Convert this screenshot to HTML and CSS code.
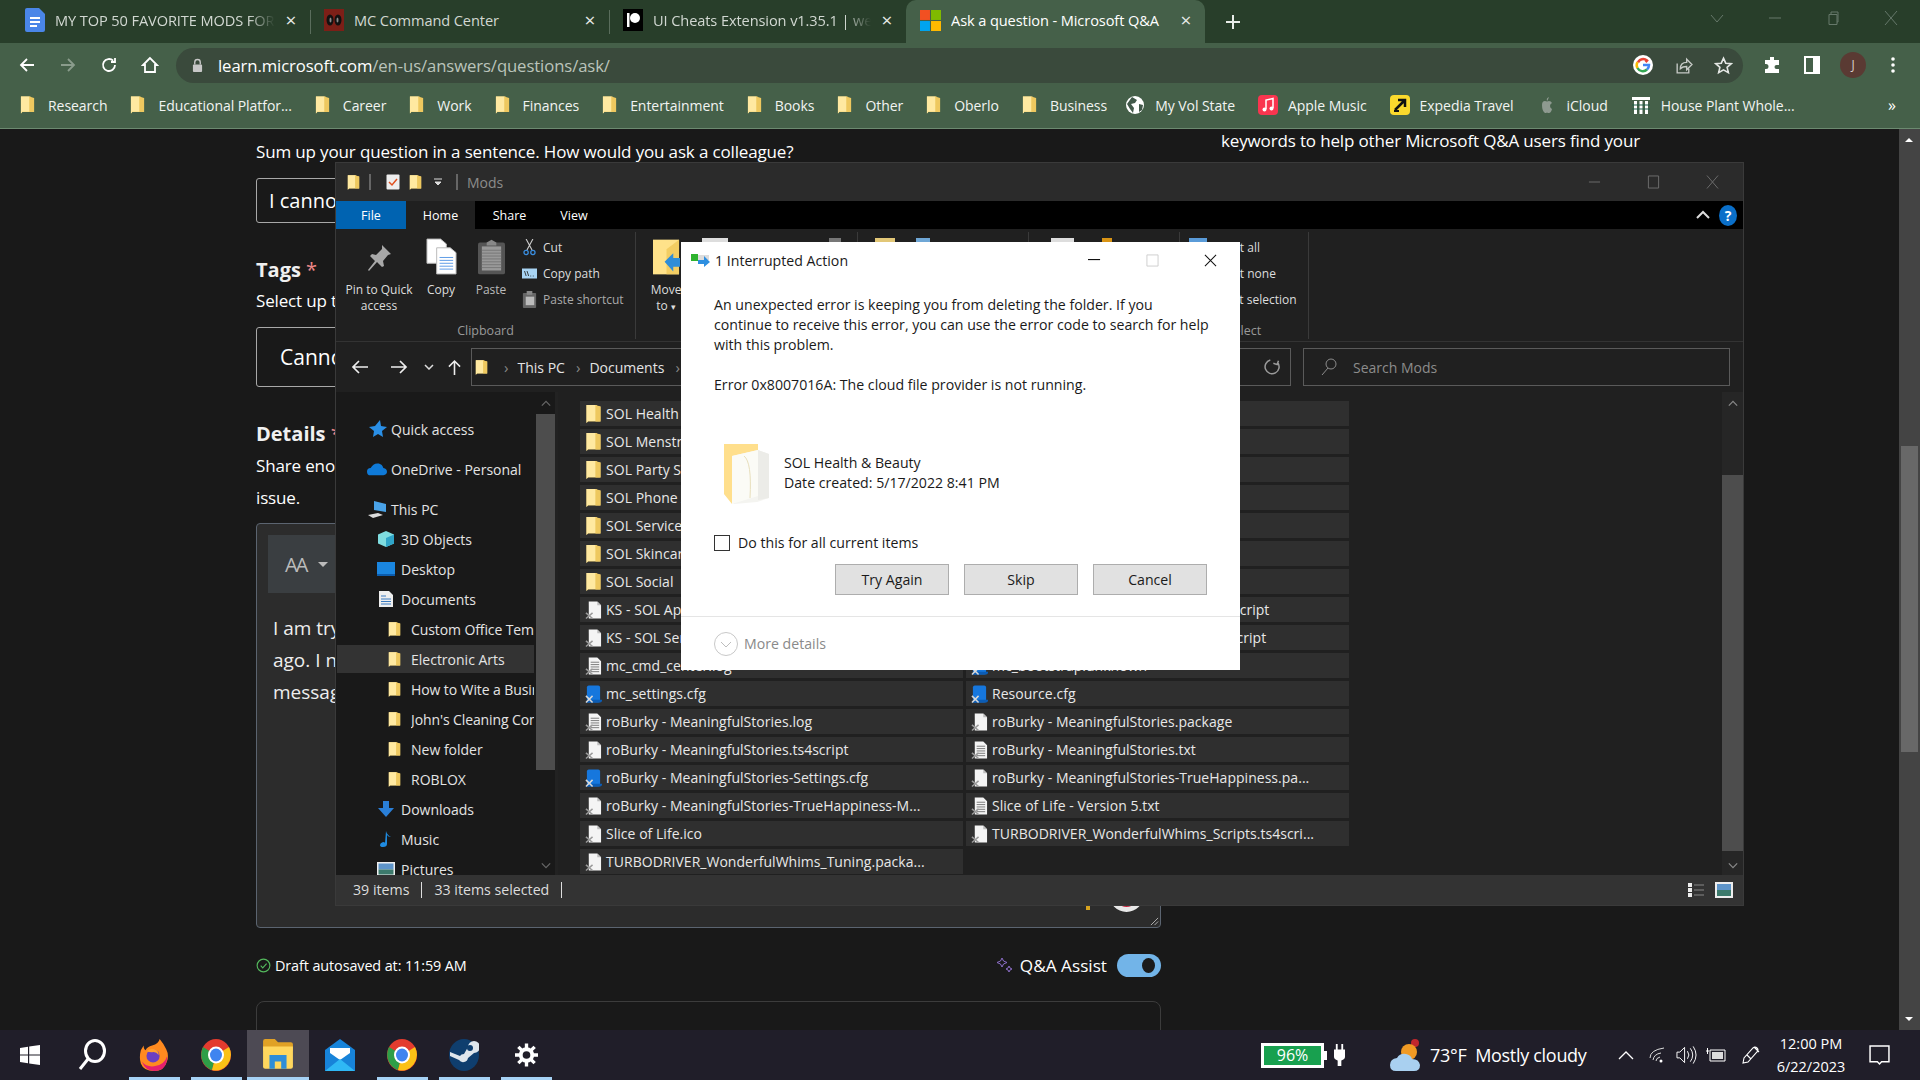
FILE: index.html
```html
<!DOCTYPE html>
<html lang="en">
<head>
<meta charset="utf-8">
<title>Ask a question - Microsoft Q&amp;A</title>
<link rel="stylesheet" href="styles.css">
</head>
<body>
<svg class="defs" aria-hidden="true">
  <symbol id="folder" viewBox="0 0 16 20"><path d="M1 1h10l1 1.500h3v15H2.500L1 19z" fill="#f5d77c"/><path d="M1 1h9v16H2.500L1 19z" fill="#ffe9a1"/><path d="M10 1l5 1.500v15H10z" fill="#eec85f"/></symbol>
  <symbol id="doc" viewBox="0 0 18 20"><path d="M4 1h9l4 4v14H4z" fill="#f4f4f4"/><path d="M13 1v4h4z" fill="#bdbdbd"/><path d="M1 13l7 6M8 13l-7 6" stroke="#9a9a9a" stroke-width="1.600"/></symbol>
  <symbol id="txt" viewBox="0 0 18 20"><path d="M4 1h9l4 4v14H4z" fill="#f4f4f4"/><path d="M6 6h9M6 8.500h9M6 11h9M6 13.500h9M6 16h9" stroke="#777"/><path d="M1 13l7 6M8 13l-7 6" stroke="#9a9a9a" stroke-width="1.600"/></symbol>
  <symbol id="cfg" viewBox="0 0 18 20"><path d="M2 3q0-2 2-2h10q2 0 2 2v15q0 1-2 1H2z" fill="#1677dd"/><path d="M2 16h16v1q0 2-2 2H2z" fill="#0b5cb5"/><path d="M1 12l7 7M8 12l-7 7" stroke="#d8d8d8" stroke-width="1.600"/></symbol>
  <symbol id="chrome" viewBox="0 0 30 32"><ellipse cx="15" cy="16" rx="15" ry="16" fill="#e33b2e"/><path d="M15 16L2 8v0a15 16 0 0 0 9 23z" fill="#2e9e47"/><path d="M15 16l13-8a15 16 0 0 1-17 23z" fill="#fbc116"/><ellipse cx="15" cy="16" rx="8" ry="8.500" fill="#fff"/><ellipse cx="15" cy="16" rx="6" ry="6.500" fill="#3f84f0"/></symbol>
</svg>

<header class="tabstrip">
  <div class="tab tab-first">
    <svg class="tab-ico" viewBox="0 0 20 24"><path d="M2 0h12l6 6v16q0 2-2 2H2q-2 0-2-2V2q0-2 2-2z" fill="#4a86e8"/><path d="M5 9h10v2H5zM5 13h10v2H5zM5 17h7v2H5z" fill="#fff"/></svg>
    <span class="tab-title fade">MY TOP 50 FAVORITE MODS FOR THE SIMS 4</span><span class="tab-x">×</span>
  </div>
  <div class="tab">
    <svg class="tab-ico" viewBox="0 0 20 22"><rect width="20" height="22" fill="#7c1f17"/><ellipse cx="6" cy="11" rx="3.500" ry="5.500" fill="#111"/><ellipse cx="14" cy="11" rx="3.500" ry="5.500" fill="#111"/><ellipse cx="6.500" cy="11" rx="1" ry="2.500" fill="#8a8a8a"/><ellipse cx="13.500" cy="11" rx="1" ry="2.500" fill="#8a8a8a"/></svg>
    <span class="tab-title">MC Command Center</span><span class="tab-x">×</span>
  </div>
  <div class="tab tab-third">
    <svg class="tab-ico" viewBox="0 0 20 22"><rect width="20" height="22" fill="#000"/><rect x="4" y="4" width="2.500" height="14" fill="#fff"/><circle cx="12" cy="9" r="5" fill="#fff"/></svg>
    <span class="tab-title fade">UI Cheats Extension v1.35.1 | weerbesu</span><span class="tab-x">×</span>
  </div>
  <div class="tab tab-active">
    <svg class="tab-ico ms" viewBox="0 0 20 20"><rect width="9.500" height="9.500" fill="#f25022"/><rect x="10.500" width="9.500" height="9.500" fill="#7fba00"/><rect y="10.500" width="9.500" height="9.500" fill="#00a4ef"/><rect x="10.500" y="10.500" width="9.500" height="9.500" fill="#ffb900"/></svg>
    <span class="tab-title">Ask a question - Microsoft Q&amp;A</span><span class="tab-x">×</span>
  </div>
  <svg class="newtab" viewBox="0 0 16 16"><path d="M8 1v14M1 8h14" stroke="#e8ece8" stroke-width="2"/></svg>
  <div class="wincontrols">
    <svg viewBox="0 0 14 14"><path d="M1 4l6 7 6-7" fill="none" stroke="#66786a"/></svg>
    <svg viewBox="0 0 14 14"><path d="M1 7h12" stroke="#66786a"/></svg>
    <svg viewBox="0 0 14 14"><path d="M3 3.500h8v10H3zM5 3.500V1h7v10h-1" fill="none" stroke="#66786a"/></svg>
    <svg viewBox="0 0 14 14"><path d="M1 0l12 14M13 0L1 14" stroke="#66786a"/></svg>
  </div>
</header>

<nav class="toolbar">
  <div class="navbtns">
    <svg viewBox="0 0 18 18"><path d="M16 9H3M9 3L3 9l6 6" fill="none" stroke="#fff" stroke-width="1.800"/></svg>
    <svg viewBox="0 0 18 18"><path d="M2 9h13M9 3l6 6-6 6" fill="none" stroke="#8a9c8c" stroke-width="1.800"/></svg>
    <svg viewBox="0 0 18 18"><path d="M15 9a6 6 0 1 1-1.800-4.300M15 2v4h-4" fill="none" stroke="#fff" stroke-width="1.800"/></svg>
    <svg viewBox="0 0 18 18"><path d="M9 2L2 9h2v7h10V9h2z" fill="none" stroke="#fff" stroke-width="1.800"/></svg>
  </div>
  <div class="omnibox">
    <svg class="lock" viewBox="0 0 12 16"><path d="M3 7V4.500a3 3 0 0 1 6 0V7" fill="none" stroke="#c8c8c8" stroke-width="1.500"/><rect x="1" y="7" width="10" height="8" rx="1" fill="#c8c8c8"/></svg>
    <span class="url"><b>learn.microsoft.com</b>/en-us/answers/questions/ask/</span>
    <svg class="gicon" viewBox="0 0 20 20"><circle cx="10" cy="10" r="10" fill="#fff"/><path d="M10 4a6 6 0 0 1 4 1.500L12.500 7" fill="none" stroke="#ea4335" stroke-width="2.500"/><path d="M5 7.500a6 6 0 0 1 5-3.500" fill="none" stroke="#ea4335" stroke-width="2.500"/><path d="M4.500 7a6 6 0 0 0 0 6" fill="none" stroke="#fbbc05" stroke-width="2.500"/><path d="M4.500 13a6 6 0 0 0 9.500 1.500" fill="none" stroke="#34a853" stroke-width="2.500"/><path d="M10 10h6a6 6 0 0 1-2 4.500" fill="none" stroke="#4285f4" stroke-width="2.500"/></svg>
    <svg class="omni-ico" viewBox="0 0 18 18"><path d="M3 7v9h11v-4M6 12q0-6 6-6V3l5 5-5 5v-3q-4 0-6 2z" fill="none" stroke="#c5c9c5" stroke-width="1.300"/></svg>
    <svg class="omni-ico" viewBox="0 0 18 18"><path d="M9 2l2.100 4.800 5.200.5-3.900 3.400 1.200 5.100L9 13.100l-4.600 2.700 1.200-5.100L1.700 7.300l5.200-.5z" fill="none" stroke="#e4e7e4" stroke-width="1.500"/></svg>
  </div>
  <div class="tool-right">
    <svg viewBox="0 0 18 18"><path d="M7 1h4v3h5v5h-2.500a2 2 0 0 0 0 4H16v4H2v-4h1a2.500 2.500 0 0 0 0-5H2V4h5z" fill="#fff"/></svg>
    <svg viewBox="0 0 18 18"><path d="M2 1h14v16H2z" fill="none" stroke="#fff" stroke-width="2"/><path d="M10 1h6v16h-6z" fill="#fff"/></svg>
    <span class="avatar">J</span>
    <svg class="kebab" viewBox="0 0 6 18"><circle cx="3" cy="3" r="1.800" fill="#fff"/><circle cx="3" cy="9" r="1.800" fill="#fff"/><circle cx="3" cy="15" r="1.800" fill="#fff"/></svg>
  </div>
</nav>

<div class="bookmarks">
  <div class="bm"><svg class="bm-ico"><use href="#folder"/></svg>Research</div>
  <div class="bm"><svg class="bm-ico"><use href="#folder"/></svg>Educational Platfor...</div>
  <div class="bm"><svg class="bm-ico"><use href="#folder"/></svg>Career</div>
  <div class="bm"><svg class="bm-ico"><use href="#folder"/></svg>Work</div>
  <div class="bm"><svg class="bm-ico"><use href="#folder"/></svg>Finances</div>
  <div class="bm"><svg class="bm-ico"><use href="#folder"/></svg>Entertainment</div>
  <div class="bm"><svg class="bm-ico"><use href="#folder"/></svg>Books</div>
  <div class="bm"><svg class="bm-ico"><use href="#folder"/></svg>Other</div>
  <div class="bm"><svg class="bm-ico"><use href="#folder"/></svg>Oberlo</div>
  <div class="bm"><svg class="bm-ico"><use href="#folder"/></svg>Business</div>
  <div class="bm bm-globe"><svg class="bm-ico wide" viewBox="0 0 20 20"><circle cx="10" cy="10" r="9" fill="#fff"/><path d="M7 2l5 3-2 3-4 1 3 4-1 5-3-4-3-5zM14 9l4 1-1 5-3 2z" fill="#42594a"/></svg>My Vol State</div>
  <div class="bm"><svg class="bm-ico wide" viewBox="0 0 20 20"><rect width="20" height="20" rx="4" fill="#f9354f"/><path d="M8 14V5l7-1.500V13" fill="none" stroke="#fff" stroke-width="1.500"/><circle cx="6.500" cy="14.500" r="2" fill="#fff"/><circle cx="13.500" cy="13.500" r="2" fill="#fff"/></svg>Apple Music</div>
  <div class="bm"><svg class="bm-ico wide" viewBox="0 0 20 20"><rect width="20" height="20" rx="4" fill="#fbd92d"/><path d="M5 15l9-9M8 5h7v7" fill="none" stroke="#111" stroke-width="2.500"/><path d="M4 16h5" stroke="#111" stroke-width="2"/></svg>Expedia Travel</div>
  <div class="bm"><svg class="bm-ico wide" viewBox="0 0 20 20"><path d="M10 6q-1-3 2-4-1 3-2 4zM5 10q0-4 3-4 1 0 2 .5 1-.5 2-.5 2 0 3 2-2 1-2 3t2 3q-1 4-3 4-1 0-2-.5-1 .5-2 .5-3-2-3-8z" fill="#8e9a90"/></svg>iCloud</div>
  <div class="bm"><svg class="bm-ico wide" viewBox="0 0 20 20"><path d="M1 2h18v3H1z" fill="#fff"/><path d="M3 6h3v13H3zM8.500 6h3v13h-3zM14 6h3v13h-3z" fill="#fff"/><path d="M1 10h18M1 14h18" stroke="#1f5c46" stroke-width="1.200"/></svg>House Plant Whole...</div>
  <span class="bm-more">»</span>
</div>

<main class="page">
  <div class="page-inner">
    <section class="left-col">
      <p class="lead">Sum up your question in a sentence. How would you ask a colleague?</p>
      <div class="field field-title">I cannot delete folders</div>
      <h2 class="label tags-label">Tags <span class="req">*</span></h2>
      <p class="lead tight">Select up to 5 tags</p>
      <div class="field field-tags">Cannot delete</div>
      <h2 class="label details-label">Details <span class="req">*</span></h2>
      <p class="lead tight">Share enough details</p>
      <p class="lead issue">issue.</p>
      <div class="editor">
        <div class="ed-toolbar"><span class="ed-aa">AA</span><span class="ed-caret"></span></div>
        <p class="ed-text">I am trying to delete a folder<br>ago. I need help with the<br>message</p>
        <div class="ed-foot"><i class="ed-dot"></i><i class="ed-emoji"></i></div>
        <svg class="ed-resize" viewBox="0 0 10 10"><path d="M9 1L1 9M9 5L5 9" stroke="#bbb"/></svg>
      </div>
      <div class="draftrow">
        <svg class="checkc" viewBox="0 0 16 16"><circle cx="8" cy="8" r="6.800" fill="none" stroke="#54b95d" stroke-width="1.200"/><path d="M5 8.200l2.200 2.300L11.300 6" fill="none" stroke="#54b95d" stroke-width="1.200"/></svg>
        <span class="draft">Draft autosaved at: 11:59 AM</span>
        <svg class="spark" viewBox="0 0 16 16"><path d="M5 1l1.500 3L10 5.500 6.500 7 5 10 3.500 7 0 5.500 3.500 4zM12 9l1 2 2 1-2 1-1 2-1-2-2-1 2-1z" fill="none" stroke="#8c6ec8"/></svg>
        <span class="assist">Q&amp;A Assist</span>
        <span class="toggle"><i></i></span>
      </div>
      <div class="nextbox"></div>
    </section>
    <aside class="right-col">keywords to help other Microsoft Q&amp;A users find your thread.</aside>
  </div>
  <div class="vscroll"><i class="up"></i><i class="thumb"></i><i class="down"></i></div>
</main>

<footer class="taskbar">
  <div class="task"><svg class="t-start" viewBox="0 0 20 20"><path d="M0 3l8-1.200V9.500H0zM9.200 1.600L20 0v9.500H9.200zM0 10.500h8v7.700L0 17zM9.200 10.500H20V20L9.200 18.400z" fill="#fff"/></svg></div>
  <div class="task"><svg class="t-search" viewBox="0 0 28 32"><ellipse cx="17" cy="12" rx="9.500" ry="10.500" fill="none" stroke="#fff" stroke-width="3"/><path d="M10 20L2 30" stroke="#fff" stroke-width="3"/></svg></div>
  <div class="task on"><svg class="t-ico" viewBox="0 0 30 34"><path d="M21 0q5 6 7 11 3 6 1 12-3 11-14 11T1 26Q-1 20 1 12l3-5q0 4 2 5 2-4 7-5 7-2 8-7z" fill="#ff8a1f"/><path d="M29 18q0 16-14 16Q6 34 2 24q5 6 13 5 11-1 14-11z" fill="#e5206e"/><circle cx="14" cy="18" r="7" fill="#6a3fc2"/><path d="M7 13q4-4 9-2 4 2 4 6-3-4-7-3-4 0-6-1z" fill="#ff9f2e"/></svg></div>
  <div class="task on"><svg class="t-ico"><use href="#chrome"/></svg></div>
  <div class="task on active"><svg class="t-ico" viewBox="0 0 28 30"><path d="M0 2q0-2 2-2h9l3 3h12q2 0 2 2v6H0z" fill="#e0a125"/><path d="M0 7h28v19q0 2-2 2H2q-2 0-2-2z" fill="#ffd75e"/><path d="M6 15h16v13h-5v-7h-6v7H6z" fill="#2e8dd8"/></svg></div>
  <div class="task"><svg class="t-ico" viewBox="0 0 30 32"><path d="M15 0l15 11v21H0V11z" fill="#1783d9"/><path d="M5 9h20v5l-10 7-10-7z" fill="#fff"/><path d="M0 32l15-12 15 12z" fill="#2fb8f5"/></svg></div>
  <div class="task on"><svg class="t-ico"><use href="#chrome"/></svg></div>
  <div class="task on"><svg class="t-ico" viewBox="0 0 30 32"><ellipse cx="15" cy="16" rx="15" ry="16" fill="#0f3e6e"/><path d="M1 17l9 4a5 5 0 0 0 9-2l6-5a6 6 0 1 0-6-6l-4 7q-3 0-4 2L1 13z" fill="#dfe6ec"/><circle cx="21" cy="9" r="3" fill="#0f3e6e"/></svg></div>
  <div class="task on"><svg class="t-gear" viewBox="0 0 24 24"><circle cx="12" cy="12" r="6" fill="none" stroke="#fff" stroke-width="4"/><path d="M12 0v6M12 18v6M0 12h6M18 12h6M3.500 3.500l4 4M16.500 16.500l4 4M20.500 3.500l-4 4M7.500 16.500l-4 4" stroke="#fff" stroke-width="3.500"/></svg></div>
  <div class="tray">
    <div class="batt"><span>96%</span></div>
    <svg class="plug" viewBox="0 0 12 24"><path d="M2 0h2v6h4V0h2v6h2v8q0 3-4 4v6H4v-6q-4-1-4-4V6h2z" fill="#fff"/></svg>
    <svg class="cloud" viewBox="0 0 30 34"><circle cx="25" cy="5" r="4" fill="#c0272d"/><circle cx="19" cy="14" r="8" fill="#f09a24"/><path d="M6 33q-6 0-6-6 0-6 7-7 3-5 9-4 5 1 6 5 7 0 8 6 0 6-6 6z" fill="#a9d0f0"/></svg>
    <span class="weather">73°F&nbsp; Mostly cloudy</span>
    <svg class="tr chev" viewBox="0 0 16 10"><path d="M1 9l7-7 7 7" fill="none" stroke="#fff" stroke-width="1.300"/></svg>
    <svg class="tr wifi" viewBox="0 0 16 18"><path d="M1 12q0-8 14-10M4 14q1-6 8-7M7 15q0-3 4-4" fill="none" stroke="#ddd"/><circle cx="12" cy="15" r="1.500" fill="#fff"/></svg>
    <svg class="tr vol" viewBox="0 0 22 20"><path d="M1 7h3l5-5v16l-5-5H1zM12 6q3 4 0 8M15 3q5 7 0 14M18 1q6 9 0 18" fill="none" stroke="#fff"/></svg>
    <svg class="tr bat2" viewBox="0 0 20 14"><path d="M4 2h15v11H4z" fill="none" stroke="#fff"/><path d="M6 4h11v7H6z" fill="#ddd"/><path d="M0 3h3M1.500 0v6" stroke="#fff"/></svg>
    <svg class="tr pen" viewBox="0 0 20 20"><path d="M2 18l1-5 9-10q2-2 4 0t0 4L7 17zM6 10l4 4M13 2l5 5" fill="none" stroke="#fff" stroke-width="1.100"/></svg>
    <div class="clock"><span>12:00 PM</span><span>6/22/2023</span></div>
    <svg class="notif" viewBox="0 0 20 20"><path d="M1 1h18v15h-7l-2 2-2-2H1z" fill="none" stroke="#fff" stroke-width="1.400"/></svg>
  </div>
</footer>

<section class="explorer">
  <div class="ex-title">
    <svg class="qa-folder"><use href="#folder"/></svg><i class="qa-sep"></i>
    <svg class="qa-check" viewBox="0 0 14 16"><rect x=".5" y=".5" width="13" height="15" rx="1" fill="#eee"/><path d="M3 8l3 3 5-6" fill="none" stroke="#e0501f" stroke-width="1.500"/></svg>
    <svg class="qa-folder"><use href="#folder"/></svg>
    <svg class="qa-drop" viewBox="0 0 8 8"><path d="M0 1h8M1 4h6l-3 3z" stroke="#ddd" fill="#ddd"/></svg><i class="qa-sep"></i>
    <span class="ex-name">Mods</span>
    <div class="ex-ctrl">
      <svg viewBox="0 0 14 14"><path d="M1 7h12" stroke="#6f6f6f"/></svg>
      <svg viewBox="0 0 14 14"><path d="M1.500 .5h11v13h-11z" fill="none" stroke="#6f6f6f"/></svg>
      <svg viewBox="0 0 14 14"><path d="M1 0l12 14M13 0L1 14" stroke="#6f6f6f"/></svg>
    </div>
  </div>
  <div class="ex-tabs">
    <span class="rt rt-file">File</span><span class="rt rt-home">Home</span><span class="rt rt-share">Share</span><span class="rt rt-view">View</span>
    <svg class="rt-up" viewBox="0 0 14 10"><path d="M1 8l6-6 6 6" fill="none" stroke="#ddd" stroke-width="2"/></svg>
    <span class="rt-help">?</span>
  </div>
  <div class="ribbon">
    <div class="rgroup g-clip">
      <div class="r-items">
        <div class="rbig rb-pin"><svg viewBox="0 0 26 28"><path d="M16 1l9 9-3 1-5 6 1 5-2 1-5-5-8 9-1-1 7-9-5-5 2-2 4 1 6-6z" fill="#a8a8a8"/></svg><span>Pin to Quick access</span></div>
        <div class="rbig rb-copy"><svg viewBox="0 0 32 38"><path d="M1 1h14l6 5v20H1z" fill="#fff" stroke="#bbb"/><path d="M11 10h14l6 5v22H11z" fill="#fff" stroke="#bbb"/><path d="M14 20h14M14 23h14M14 26h14M14 29h14M14 32h14" stroke="#5c9be6"/></svg><span>Copy</span></div>
        <div class="rbig rb-paste"><svg viewBox="0 0 28 36"><rect y="3" width="28" height="33" rx="2" fill="#555"/><path d="M9 3l5-3 5 3v3H9z" fill="#888"/><path d="M4 7h20v25H4z" fill="#999"/><path d="M4 11h20M4 14h20M4 17h20M4 20h20M4 23h20M4 26h20M4 29h20" stroke="#777"/></svg><span>Paste</span></div>
        <div class="rsmalls">
          <div class="rs"><svg viewBox="0 0 14 20"><path d="M3 0l7 13M11 0L4 13" stroke="#ccc" stroke-width="1.300"/><circle cx="3" cy="16" r="2.500" fill="none" stroke="#3a8ee0" stroke-width="1.500"/><circle cx="11" cy="16" r="2.500" fill="none" stroke="#3a8ee0" stroke-width="1.500"/></svg>Cut</div>
          <div class="rs"><svg viewBox="0 0 18 12"><rect width="18" height="12" fill="#a8d4f4"/><path d="M3 3l2 6M6 3l2 6M10 9h1M13 9h1" stroke="#222"/></svg>Copy path</div>
          <div class="rs dim"><svg viewBox="0 0 14 18"><rect y="2" width="14" height="16" rx="1" fill="#666"/><rect x="4" y="0" width="6" height="4" fill="#888"/><rect x="3" y="6" width="9" height="9" fill="#bbb"/></svg>Paste shortcut</div>
        </div>
      </div>
      <div class="rlabel">Clipboard</div>
    </div>
    <div class="rgroup g-org">
      <div class="r-items">
        <div class="rbig rb-move"><svg viewBox="0 0 28 36"><path d="M0 0h27v36H0z" fill="#ffe28a"/><path d="M27 0v36H14V10z" fill="#f3cd62"/><path d="M12 23l9-9v5h7v9h-7v5z" fill="#2e8dd8"/></svg><span>Move<br>to <em>▾</em></span></div>
        <i class="peek p-copy"></i><i class="peek p-x"></i>
      </div>
      <div class="rlabel"></div>
    </div>
    <div class="rgroup g-new"><div class="r-items"><i class="peek p-pale"></i><i class="peek p-blue"></i></div><div class="rlabel"></div></div>
    <div class="rgroup g-open"><div class="r-items"><i class="peek p-white"></i><i class="peek p-orange"></i></div><div class="rlabel"></div></div>
    <div class="rgroup g-select">
      <div class="r-items">
        <i class="peek p-grid"></i>
        <div class="rsmalls sel"><div class="rs">Select all</div><div class="rs">Select none</div><div class="rs">Invert selection</div></div>
      </div>
      <div class="rlabel">Select</div>
    </div>
  </div>
  <div class="addr">
    <svg class="ar" viewBox="0 0 18 14"><path d="M17 7H2M8 1L2 7l6 6" fill="none" stroke="#eee" stroke-width="1.700"/></svg>
    <svg class="ar" viewBox="0 0 18 14"><path d="M1 7h15M10 1l6 6-6 6" fill="none" stroke="#eee" stroke-width="1.700"/></svg>
    <svg class="ar small" viewBox="0 0 10 6"><path d="M1 1l4 4 4-4" fill="none" stroke="#ddd" stroke-width="1.500"/></svg>
    <svg class="ar up" viewBox="0 0 14 18"><path d="M7 17V2M1 8l6-6 6 6" fill="none" stroke="#eee" stroke-width="1.700"/></svg>
    <div class="crumbs">
      <svg class="qa-folder"><use href="#folder"/></svg>
      <em>›</em><span>This PC</span><em>›</em><span>Documents</span><em>›</em><span>Mods</span>
      <svg class="refresh" viewBox="0 0 16 18"><path d="M4 3a7 7 0 1 0 8 0M12 1v4H8" fill="none" stroke="#9a9a9a" stroke-width="1.500" transform="rotate(20 8 9)"/></svg>
    </div>
    <div class="searchbox">
      <svg viewBox="0 0 16 18"><circle cx="10" cy="6" r="5" fill="none" stroke="#8c8c8c"/><path d="M7 10l-6 7" stroke="#8c8c8c"/></svg>
      <span>Search Mods</span>
    </div>
  </div>
  <div class="ex-body">
    <div class="navpane">
      <div class="navlist">
        <div class="ni l0 gap"><svg viewBox="0 0 20 18"><path d="M13 0l1 6 6 1-5 4 1 6-5-3-5 3 1-6-5-4 6-1z" fill="#2a8fe6"/></svg>Quick access</div>
        <div class="ni l0 gap"><svg viewBox="0 0 22 14"><path d="M4 14Q0 14 0 10t4-4q3-6 9-5 4 1 5 5 4 1 4 4t-4 4z" fill="#0f7ad8"/></svg>OneDrive - Personal</div>
        <div class="ni l0"><svg viewBox="0 0 20 18"><path d="M7 1l12 3v8l-12-2z" fill="#4aa3e8"/><path d="M1 15l10-2 5 2-10 3z" fill="#ddd"/></svg>This PC</div>
        <div class="ni l1"><svg viewBox="0 0 18 18"><path d="M9 0l9 4v10l-9 4-9-4V4z" fill="#7fdde0"/><path d="M9 8l9-4v10l-9 4z" fill="#2fa5c8"/></svg>3D Objects</div>
        <div class="ni l1"><svg viewBox="0 0 18 14"><rect width="18" height="14" fill="#1a86e0"/><path d="M0 12h18v2H0z" fill="#0b5cad"/></svg>Desktop</div>
        <div class="ni l1"><svg viewBox="0 0 14 16"><path d="M0 0h10l4 4v12H0z" fill="#eee"/><path d="M2 5h5M2 8h10M2 10.500h10M2 13h10" stroke="#3a7abf"/></svg>Documents</div>
        <div class="ni l2"><svg><use href="#folder"/></svg><span class="clipt">Custom Office Templates</span></div>
        <div class="ni l2 sel"><svg><use href="#folder"/></svg>Electronic Arts</div>
        <div class="ni l2"><svg><use href="#folder"/></svg><span class="clipt">How to Wite a Business Plan</span></div>
        <div class="ni l2"><svg><use href="#folder"/></svg><span class="clipt">John's Cleaning Company</span></div>
        <div class="ni l2"><svg><use href="#folder"/></svg>New folder</div>
        <div class="ni l2"><svg><use href="#folder"/></svg>ROBLOX</div>
        <div class="ni l1"><svg viewBox="0 0 16 16"><path d="M5 0h6v7h5l-8 9-8-9h5z" fill="#2a7fd8"/></svg>Downloads</div>
        <div class="ni l1"><svg viewBox="0 0 12 16"><path d="M6 0q1 4 5 6-3 0-4-2v9q0 3-4 3-3 0-3-2t3-3q2 0 2 1z" fill="#1f8be0"/></svg>Music</div>
        <div class="ni l1"><svg viewBox="0 0 18 14"><rect width="18" height="14" fill="#eee"/><rect x="1.500" y="1.500" width="15" height="6" fill="#5e94c9"/><path d="M1.500 7.500h15v5h-15z" fill="#3c7a6c"/></svg>Pictures</div>
      </div>
      <div class="navscroll"><svg class="nsa" viewBox="0 0 12 7"><path d="M1 6l5-5 5 5" fill="none" stroke="#666" stroke-width="1.500"/></svg><i></i><svg class="nsa b" viewBox="0 0 12 7"><path d="M1 1l5 5 5-5" fill="none" stroke="#666" stroke-width="1.500"/></svg></div>
    </div>
    <div class="files">
      <div class="filegrid">
        <div class="fr"><svg><use href="#folder"/></svg>SOL Health &amp; Beauty</div>
        <div class="fr"><svg><use href="#folder"/></svg>SOL Menstruation</div>
        <div class="fr"><svg><use href="#folder"/></svg>SOL Party Supplies</div>
        <div class="fr"><svg><use href="#folder"/></svg>SOL Phone Apps</div>
        <div class="fr"><svg><use href="#folder"/></svg>SOL Services</div>
        <div class="fr"><svg><use href="#folder"/></svg>SOL Skincare</div>
        <div class="fr"><svg><use href="#folder"/></svg>SOL Social</div>
        <div class="fr"><svg><use href="#doc"/></svg>KS - SOL Apps.package</div>
        <div class="fr"><svg><use href="#doc"/></svg>KS - SOL Services.package</div>
        <div class="fr"><svg><use href="#txt"/></svg>mc_cmd_center.log</div>
        <div class="fr"><svg><use href="#cfg"/></svg>mc_settings.cfg</div>
        <div class="fr"><svg><use href="#txt"/></svg>roBurky - MeaningfulStories.log</div>
        <div class="fr"><svg><use href="#doc"/></svg>roBurky - MeaningfulStories.ts4script</div>
        <div class="fr"><svg><use href="#cfg"/></svg>roBurky - MeaningfulStories-Settings.cfg</div>
        <div class="fr"><svg><use href="#doc"/></svg>roBurky - MeaningfulStories-TrueHappiness-M...</div>
        <div class="fr"><svg><use href="#doc"/></svg>Slice of Life.ico</div>
        <div class="fr"><svg><use href="#doc"/></svg>TURBODRIVER_WonderfulWhims_Tuning.packa...</div>
        <div class="fr"></div><div class="fr"></div><div class="fr"></div><div class="fr"></div><div class="fr"></div><div class="fr"></div><div class="fr"></div>
        <div class="fr"><svg><use href="#doc"/></svg>KS - SOL Custom Apps - Phone v2.ts4script</div>
        <div class="fr"><svg><use href="#doc"/></svg>KS - SOL Custom Services - Packs.ts4script</div>
        <div class="fr"><svg><use href="#cfg"/></svg>mc_bootstrap.unknown</div>
        <div class="fr"><svg><use href="#cfg"/></svg>Resource.cfg</div>
        <div class="fr"><svg><use href="#doc"/></svg>roBurky - MeaningfulStories.package</div>
        <div class="fr"><svg><use href="#txt"/></svg>roBurky - MeaningfulStories.txt</div>
        <div class="fr"><svg><use href="#doc"/></svg>roBurky - MeaningfulStories-TrueHappiness.pa...</div>
        <div class="fr"><svg><use href="#txt"/></svg>Slice of Life - Version 5.txt</div>
        <div class="fr"><svg><use href="#doc"/></svg>TURBODRIVER_WonderfulWhims_Scripts.ts4scri...</div>
      </div>
      <div class="filescroll"><svg class="nsa" viewBox="0 0 12 7"><path d="M1 6l5-5 5 5" fill="none" stroke="#888" stroke-width="1.500"/></svg><i></i><svg class="nsa b" viewBox="0 0 12 7"><path d="M1 1l5 5 5-5" fill="none" stroke="#888" stroke-width="1.500"/></svg></div>
    </div>
  </div>
  <div class="ex-status">
    <span>39 items</span><i></i><span>33 items selected</span><i></i>
    <svg class="vw" viewBox="0 0 18 16"><path d="M1 1h4v4H1zM1 6h4v4H1zM1 11h4v4H1z" fill="#eee"/><path d="M7 3h10M7 8h10M7 13h10" stroke="#888"/></svg>
    <svg class="vw big" viewBox="0 0 18 16"><rect width="18" height="16" fill="#eee"/><rect x="2" y="2" width="14" height="6" fill="#5e94c9"/><rect x="2" y="8" width="14" height="6" fill="#3c7a6c"/></svg>
  </div>
</section>

<section class="dialog">
  <div class="dlg-title">
    <svg class="dlg-ico" viewBox="0 0 20 16"><rect y="2" width="7" height="7" fill="#2fb32f"/><rect x="7" y="3" width="11" height="5" fill="#ddd"/><path d="M7 8h6V4l6 6-6 5v-3H7z" fill="#2e8fe0"/></svg>
    <span>1 Interrupted Action</span>
    <div class="dlg-ctrl">
      <svg viewBox="0 0 14 14"><path d="M0 6h13" stroke="#111" stroke-width="1.200"/></svg>
      <svg viewBox="0 0 14 14"><path d="M1 1h12v12H1z" fill="none" stroke="#ccc"/></svg>
      <svg viewBox="0 0 14 14"><path d="M1 1l12 12M13 1L1 13" stroke="#111" stroke-width="1.100"/></svg>
    </div>
  </div>
  <div class="dlg-body">
    <p class="dlg-msg">An unexpected error is keeping you from deleting the folder. If you continue to receive this error, you can use the error code to search for help with this problem.</p>
    <p class="dlg-err">Error 0x8007016A: The cloud file provider is not running.</p>
    <div class="dlg-item">
      <svg class="bigfolder" viewBox="0 0 46 60"><path d="M0 0h34v6l11 4v44l-12 4L10 60 0 50z" fill="#f4f4f0"/><path d="M0 0h34v6L8 12v48L0 50z" fill="#ffdf8c"/><path d="M8 12l26-6v46L8 60z" fill="#fbfbf6"/><path d="M34 6l11 4v44l-11 2z" fill="#ecece8"/><path d="M20 12q8 6 6 42" fill="none" stroke="#e8dfbc"/></svg>
      <div class="dlg-itemtext"><span>SOL Health &amp; Beauty</span><span>Date created: 5/17/2022 8:41 PM</span></div>
    </div>
    <label class="dlg-check"><i></i>Do this for all current items</label>
    <div class="dlg-btns"><span>Try Again</span><span>Skip</span><span>Cancel</span></div>
  </div>
  <div class="dlg-foot">
    <svg viewBox="0 0 24 24"><circle cx="12" cy="12" r="11.500" fill="none" stroke="#c8c8c8"/><path d="M7 10l5 5 5-5" fill="none" stroke="#bdbdbd"/></svg>
    <span>More details</span>
  </div>
</section>
</body>
</html>
```

FILE: styles.css
```css
* { box-sizing: border-box; }
html, body { margin: 0; padding: 0; }
body {
  width: 1920px; height: 1080px; overflow: hidden; position: relative;
  display: flex; flex-direction: column;
  font-family: "Open Sans", "Noto Sans", sans-serif; color: #fff; background: #191919;
}
.defs { position: absolute; width: 0; height: 0; }
i, em { font-style: normal; }
p, h2 { margin: 0; }

/* browser chrome */
.tabstrip { height: 43px; flex: none; background: #283e2a; display: flex; align-items: center; font-size: 14.600px; letter-spacing: -.1px; }
.tab { width: 299px; height: 43px; flex: none; display: flex; align-items: center; padding: 0 9px 3px 14px; position: relative; color: #d2d8d2; }
.tab-first { width: 310px; padding-left: 25px; }
.tab-third { width: 297px; }
.tab + .tab::before { content: ""; position: absolute; left: 0; top: 10px; height: 24px; width: 1px; background: #5a6d5c; }
.tab-ico { width: 20px; height: 24px; flex: none; margin-right: 10px; }
.tab-title { flex: 1; overflow: hidden; white-space: nowrap; }
.fade { -webkit-mask-image: linear-gradient(to right, #000 88%, transparent 100%); mask-image: linear-gradient(to right, #000 88%, transparent 100%); }
.tab-x { flex: none; width: 20px; text-align: center; font-size: 19px; line-height: 20px; color: #e6e9e6; margin-left: 6px; }
.tab-active { background: #456049; color: #fff; border-radius: 10px 10px 0 0; padding-left: 14px; }
.tab-active::before { display: none; }
.tab-ico.ms { width: 21px; height: 21px; }
.newtab { width: 16px; height: 16px; margin-left: 20px; }
.wincontrols { margin-left: auto; display: flex; gap: 44px; padding: 0 22px 8px 0; }
.wincontrols svg { width: 14px; height: 14px; }

.toolbar { height: 44px; flex: none; background: #456049; display: flex; align-items: center; }
.navbtns { display: flex; gap: 23px; padding-left: 18px; width: 176px; }
.navbtns svg { width: 18px; height: 18px; }
.omnibox { width: 1567px; height: 35px; flex: none; background: #3a4a3c; border-radius: 18px; display: flex; align-items: center; padding: 0 10px 0 16px; font-size: 16.700px; }
.lock { width: 11px; height: 15px; margin-right: 15px; }
.url { color: #bac4bb; flex: 1; letter-spacing: -.1px; white-space: nowrap; }
.url b { font-weight: 400; color: #fff; }
.gicon { width: 20px; height: 20px; }
.omni-ico { width: 19px; height: 19px; margin-left: 21px; }
.tool-right { display: flex; align-items: center; padding-left: 20px; flex: 1; }
.tool-right svg { width: 18px; height: 18px; margin-right: 22px; }
.tool-right svg.kebab { width: 6px; margin: 0 0 0 24px; }
.avatar { width: 26px; height: 26px; border-radius: 50%; background: #5a3a33; color: #d8cfcc; font-size: 12px; text-align: center; line-height: 26px; margin-left: -3px; }

.bookmarks { height: 42px; flex: none; background: #456049; border-bottom: 1px solid #6c8a70; display: flex; align-items: center; padding: 0 0 5px 20px; gap: 23px; font-size: 14px; letter-spacing: -.05px; }
.bm { display: flex; align-items: center; gap: 13px; white-space: nowrap; color: #f2f4f2; }
.bm-globe { margin-left: -5px; }
.bm-ico { width: 15px; height: 20px; flex: none; }
.bm-ico.wide { width: 20px; height: 20px; margin-right: -3px; }
.bm-more { margin-left: auto; padding-right: 24px; font-size: 16px; }

/* page behind the windows */
.page { flex: 1; min-height: 0; display: flex; background: #191919; overflow: hidden; }
.page-inner { flex: 1; display: flex; padding: 0 0 0 256px; gap: 60px; height: 901px; overflow: hidden; }
.left-col { width: 905px; flex: none; }
.right-col { width: 440px; font-size: 17px; letter-spacing: -.15px; line-height: 29px; color: #fff; margin-top: -3px; }
.lead { font-size: 17px; letter-spacing: -.15px; line-height: 32px; white-space: nowrap; height: 32px; margin-top: 7px; }
.lead.tight { margin-top: 0; }
.lead.issue { margin-top: 0; }
.field { border: 1px solid #a8a8a8; border-radius: 3px; font-size: 20px; display: flex; align-items: center; overflow: hidden; white-space: nowrap; }
.field-title { height: 45px; padding-left: 12px; margin-top: 10px; }
.field-tags { height: 60px; padding-left: 23px; font-size: 21px; margin-top: 10px; }
.label { font-size: 20px; line-height: 30px; font-weight: 700; color: #f0f0f0; }
.tags-label { margin-top: 32px; }
.details-label { margin-top: 32px; height: 31px; }
.req { color: #e88; font-weight: 400; }
.editor { height: 405px; margin-top: 9px; background: #2c2c2c; border: 1px solid #5b6470; border-radius: 4px; display: flex; flex-direction: column; padding: 11px; position: relative; }
.ed-toolbar { height: 58px; flex: none; background: #3a3e41; display: flex; align-items: center; padding-left: 17px; gap: 12px; color: #bbb; }
.ed-aa { font-size: 20px; letter-spacing: -2px; }
.ed-caret { border: 5px solid transparent; border-top: 5px solid #bbb; margin-top: 5px; }
.ed-text { font-size: 19px; line-height: 32px; margin-top: 19px; padding-left: 5px; flex: 1; white-space: nowrap; color: #eee; }
.ed-foot { display: flex; justify-content: flex-end; align-items: flex-end; gap: 19px; height: 40px; flex: none; padding: 0 5px 4px 0; }
.ed-dot { width: 4px; height: 6px; background: #d6a21e; margin-bottom: 2px; }
.ed-emoji { width: 35px; height: 35px; border-radius: 50%; background: #c9223c; border: 5px solid #e8e8e8; }
.ed-resize { position: absolute; right: 1px; bottom: 1px; width: 9px; height: 9px; }
.draftrow { display: flex; align-items: center; height: 36px; margin-top: 19px; }
.checkc { width: 15px; height: 15px; margin-right: 4px; }
.draft { font-size: 14.400px; letter-spacing: -.1px; }
.spark { width: 16px; height: 18px; margin-left: auto; margin-right: 7px; }
.assist { font-size: 17.200px; margin-right: 10px; }
.toggle { width: 44px; height: 23px; border-radius: 12px; background: #72b4e8; display: flex; align-items: center; justify-content: flex-end; padding-right: 6px; }
.toggle i { width: 13px; height: 15px; border-radius: 50%; background: #1b1b1b; }
.nextbox { height: 80px; margin-top: 18px; border: 1px solid #3c3c3c; border-radius: 8px; }
.vscroll { width: 21px; flex: none; background: #444; position: relative; height: 901px; }
.vscroll .thumb { position: absolute; left: 2px; right: 2px; top: 317px; height: 306px; background: #686868; }
.vscroll .up, .vscroll .down { position: absolute; left: 6px; border: 4px solid transparent; }
.vscroll .up { top: 5px; border-bottom: 4px solid #fff; }
.vscroll .down { bottom: 5px; border-top: 4px solid #fff; }

/* taskbar */
.taskbar { height: 50px; flex: none; background: #201e29; display: flex; position: relative; z-index: 1; }
.task { width: 62px; flex: none; height: 50px; display: flex; align-items: center; justify-content: center; position: relative; }
.task:first-child { margin-left: -1px; }
.task.on::after { content: ""; position: absolute; left: 6px; right: 5px; bottom: 0; height: 3px; background: #a6d2f5; }
.task.active { background: #4d4a54; }
.task.active::after { left: 0; right: 0; }
.t-start { width: 20px; height: 24px; }
.t-search { width: 28px; height: 32px; }
.t-ico { width: 30px; height: 32px; }
.t-gear { width: 23px; height: 24px; }
.tray { flex: 1; display: flex; align-items: center; padding-left: 704px; font-size: 18px; }
.batt { width: 63px; height: 25px; border: 3px solid #fff; background: #18a04f; font-size: 16px; display: flex; align-items: center; justify-content: center; position: relative; color: #fff; }
.batt::after { content: ""; position: absolute; right: -6px; top: 5px; width: 3px; height: 9px; background: #fff; }
.plug { width: 11px; height: 24px; margin-left: 10px; }
.cloud { width: 30px; height: 34px; margin-left: 45px; }
.weather { margin-left: 10px; white-space: nowrap; font-size: 18px; letter-spacing: -.3px; width: 160px; }
.tr { flex: none; }
.chev { width: 16px; height: 10px; margin-left: 28px; }
.wifi { width: 16px; height: 18px; margin-left: 15px; }
.vol { width: 21px; height: 20px; margin-left: 11px; }
.bat2 { width: 20px; height: 14px; margin-left: 9px; }
.pen { width: 20px; height: 20px; margin-left: 15px; }
.clock { width: 90px; margin-left: 5px; display: flex; flex-direction: column; align-items: center; font-size: 14.500px; line-height: 23px; }
.notif { width: 21px; height: 21px; margin-left: 13px; }

/* Explorer window on the desktop */
.explorer { position: absolute; left: 336px; top: 163px; width: 1407px; height: 742px; background: #202020; display: flex; flex-direction: column; box-shadow: 0 0 0 1px #3a3a3a; font-size: 14px; }
.ex-title { height: 38px; background: #2b2b2b; display: flex; align-items: center; padding-left: 11px; gap: 9px; flex: none; }
.qa-folder { width: 13px; height: 17px; flex: none; }
.qa-sep { width: 2px; height: 16px; background: #666; margin: 0 6px 0 0; }
.qa-check { width: 14px; height: 16px; margin-left: 0; }
.qa-drop { width: 8px; height: 8px; margin-left: 3px; }
.qa-drop + .qa-sep { margin-left: 5px; }
.ex-name { color: #8c8c8c; font-size: 14px; margin-left: -6px; }
.ex-ctrl { margin-left: auto; display: flex; gap: 46px; padding-right: 24px; }
.ex-ctrl svg { width: 13px; height: 14px; }
.ex-tabs { height: 28px; background: #000; display: flex; align-items: center; flex: none; font-size: 12.500px; }
.rt { height: 28px; display: flex; align-items: center; justify-content: center; }
.rt-file { width: 70px; background: #0063b1; }
.rt-home { width: 69px; background: #202020; }
.rt-share { width: 69px; }
.rt-view { width: 60px; }
.rt-up { width: 14px; height: 10px; margin-left: auto; margin-right: 9px; }
.rt-help { width: 18px; height: 21px; border-radius: 50%; background: #0a6fc9; text-align: center; font-weight: 700; line-height: 21px; margin-right: 6px; font-size: 14px; }
.ribbon { height: 113px; flex: none; display: flex; border-bottom: 1px solid #333; font-size: 12px; }
.rgroup { display: flex; flex-direction: column; border-right: 1px solid #3a3a3a; margin: 3px 0 2px; }
.r-items { height: 91px; flex: none; display: flex; position: relative; }
.rlabel { height: 16px; text-align: center; color: #999; font-size: 12.500px; line-height: 16px; }
.g-clip { width: 300px; }
.g-org { width: 222px; }
.g-new { width: 171px; }
.g-open { width: 151px; }
.g-select { width: 129px; }
.rbig { display: flex; flex-direction: column; align-items: center; text-align: center; color: #ddd; line-height: 16px; flex: none; }
.rbig svg { flex: none; }
.rbig span { display: block; }
.rb-pin { width: 78px; margin-left: 4px; padding-top: 12px; }
.rb-pin svg { width: 26px; height: 28px; }
.rb-pin span { margin-top: 10px; }
.rb-copy { width: 44px; padding-top: 6px; margin-left: 1px; }
.rb-copy svg { width: 31px; height: 37px; }
.rb-copy span { margin-top: 7px; }
.rb-paste { width: 44px; padding-top: 7px; margin-left: 6px; }
.rb-paste svg { width: 27px; height: 36px; }
.rb-paste span { margin-top: 7px; color: #bbb; }
.rsmalls { display: flex; flex-direction: column; padding-left: 9px; padding-top: 2px; }
.rs { height: 26px; display: flex; align-items: center; gap: 6px; white-space: nowrap; color: #ddd; }
.rs svg { width: 15px; height: 17px; flex: none; }
.rs.dim { color: #aaa; }
.rb-move { width: 40px; margin-left: 10px; padding-top: 7px; }
.rb-move svg { width: 27px; height: 36px; }
.rb-move span { margin-top: 7px; }
.rb-move em { font-size: 9px; }
.peek { position: absolute; top: 6px; height: 6px; }
.p-copy { left: 66px; width: 26px; background: #ddd; }
.p-x { left: 193px; width: 12px; background: #777; }
.p-pale { left: 17px; width: 20px; background: #e2c777; }
.p-blue { left: 58px; width: 14px; background: #6fa7d6; }
.p-white { left: 22px; width: 23px; background: #ddd; }
.p-orange { left: 73px; width: 10px; background: #d99415; }
.p-grid { left: 9px; width: 18px; background: #5a9bd8; }
.rsmalls.sel { padding-left: 31px; }
.addr { height: 50px; flex: none; display: flex; align-items: center; padding-left: 15px; }
.ar { width: 18px; height: 14px; margin-right: 21px; flex: none; }
.ar.small { width: 10px; height: 6px; margin-right: 14px; margin-left: -5px; }
.ar.up { width: 13px; height: 17px; margin-right: 10px; }
.crumbs { width: 820px; height: 38px; flex: none; border: 1px solid #5a5a5a; display: flex; align-items: center; padding-left: 3px; color: #e4e4e4; font-size: 14px; position: relative; }
.crumbs .qa-folder { margin-right: 5px; }
.crumbs em { color: #888; margin: 0 9px 0 11px; font-size: 15px; }
.refresh { position: absolute; right: 10px; top: 9px; width: 16px; height: 18px; }
.searchbox { width: 427px; height: 38px; margin-left: 12px; flex: none; border: 1px solid #5a5a5a; display: flex; align-items: center; padding-left: 17px; gap: 16px; color: #8c8c8c; font-size: 14px; }
.searchbox svg { width: 16px; height: 18px; }
.ex-body { flex: 1; min-height: 0; display: flex; }
.navpane { width: 222px; flex: none; background: #191919; display: flex; border-right: 3px solid #222; overflow: hidden; }
.navlist { width: 198px; flex: none; margin-right: 2px; padding: 22px 0 0 1px; overflow: hidden; }
.ni { height: 30px; display: flex; align-items: center; white-space: nowrap; overflow: hidden; color: #e4e4e4; font-size: 14px; }
.ni svg { flex: none; }
.ni.gap { margin-bottom: 10px; }
.ni.l0 { padding-left: 30px; }
.ni.l0 svg { width: 20px; height: 18px; margin-right: 4px; }
.ni.l1 { padding-left: 40px; }
.ni.l1 svg { width: 18px; height: 16px; margin-right: 6px; }
.ni.l2 { padding-left: 51px; }
.ni.l2 svg { width: 13px; height: 17px; margin-right: 10px; }
.ni.sel { background: #333; margin-top: 1px; height: 28px; margin-bottom: 1px; }
.clipt { overflow: hidden; letter-spacing: -.1px; }
.navscroll { width: 19px; flex: none; background: #191919; display: flex; flex-direction: column; }
.navscroll i { display: block; height: 356px; background: #4d4d4d; margin-top: 7px; }
.nsa { width: 10px; height: 7px; margin: 8px auto 0; flex: none; }
.nsa.b { margin-top: auto; margin-bottom: 6px; }
.files { flex: 1; display: flex; padding: 9px 0 0 22px; min-width: 0; background: #202020; }
.filegrid { display: grid; grid-template-rows: repeat(17, 25px); grid-auto-flow: column; grid-auto-columns: 383px; column-gap: 3px; row-gap: 3px; align-content: start; height: 470px; }
.fr { background: #2f2f2f; display: flex; align-items: center; padding-left: 5px; white-space: nowrap; overflow: hidden; color: #e8e8e8; font-size: 14px; letter-spacing: .03px; }
.fr svg { width: 17px; height: 20px; margin-right: 4px; flex: none; }
.filescroll { margin-left: auto; width: 21px; flex: none; margin-top: -9px; display: flex; flex-direction: column; background: #262626; }
.filescroll i { display: block; height: 376px; margin-top: 68px; background: #4d4d4d; }
.ex-status { height: 30px; flex: none; background: #333; display: flex; align-items: center; padding: 0 0 1px 17px; font-size: 14.200px; color: #ddd; }
.ex-status i { width: 1px; height: 16px; background: #ddd; margin: 0 12px; }
.vw { width: 18px; height: 16px; margin-left: auto; }
.vw.big { margin-left: 10px; margin-right: 10px; }

/* error dialog */
.dialog { position: absolute; left: 681px; top: 242px; width: 559px; height: 428px; background: #fff; color: #1a1a1a; display: flex; flex-direction: column; font-size: 14.150px; z-index: 2; }
.dlg-title { height: 36px; display: flex; align-items: center; padding-left: 10px; flex: none; }
.dlg-ico { width: 20px; height: 16px; margin-right: 4px; }
.dlg-ctrl { margin-left: auto; display: flex; gap: 45px; padding-right: 23px; }
.dlg-ctrl svg { width: 13px; height: 13px; }
.dlg-body { flex: 1; padding: 17px 33px 0; }
.dlg-msg, .dlg-err { line-height: 20px; }
.dlg-msg { width: 500px; }
.dlg-err { margin-top: 20px; }
.dlg-item { display: flex; align-items: center; margin-top: 49px; padding-left: 10px; }
.bigfolder { width: 46px; height: 60px; }
.dlg-itemtext { display: flex; flex-direction: column; line-height: 20px; margin-left: 14px; padding-bottom: 3px; }
.dlg-check { display: flex; align-items: center; gap: 8px; margin-top: 29px; line-height: 20px; }
.dlg-check i { width: 16px; height: 16px; border: 1px solid #333; flex: none; }
.dlg-btns { display: flex; justify-content: flex-end; gap: 15px; margin-top: 11px; }
.dlg-btns span { width: 114px; height: 31px; background: #e1e1e1; border: 1px solid #adadad; display: flex; align-items: center; justify-content: center; }
.dlg-foot { height: 54px; flex: none; border-top: 1px solid #e5e5e5; display: flex; align-items: center; padding-left: 33px; gap: 6px; color: #8a8a8a; }
.dlg-foot svg { width: 24px; height: 24px; }
```
